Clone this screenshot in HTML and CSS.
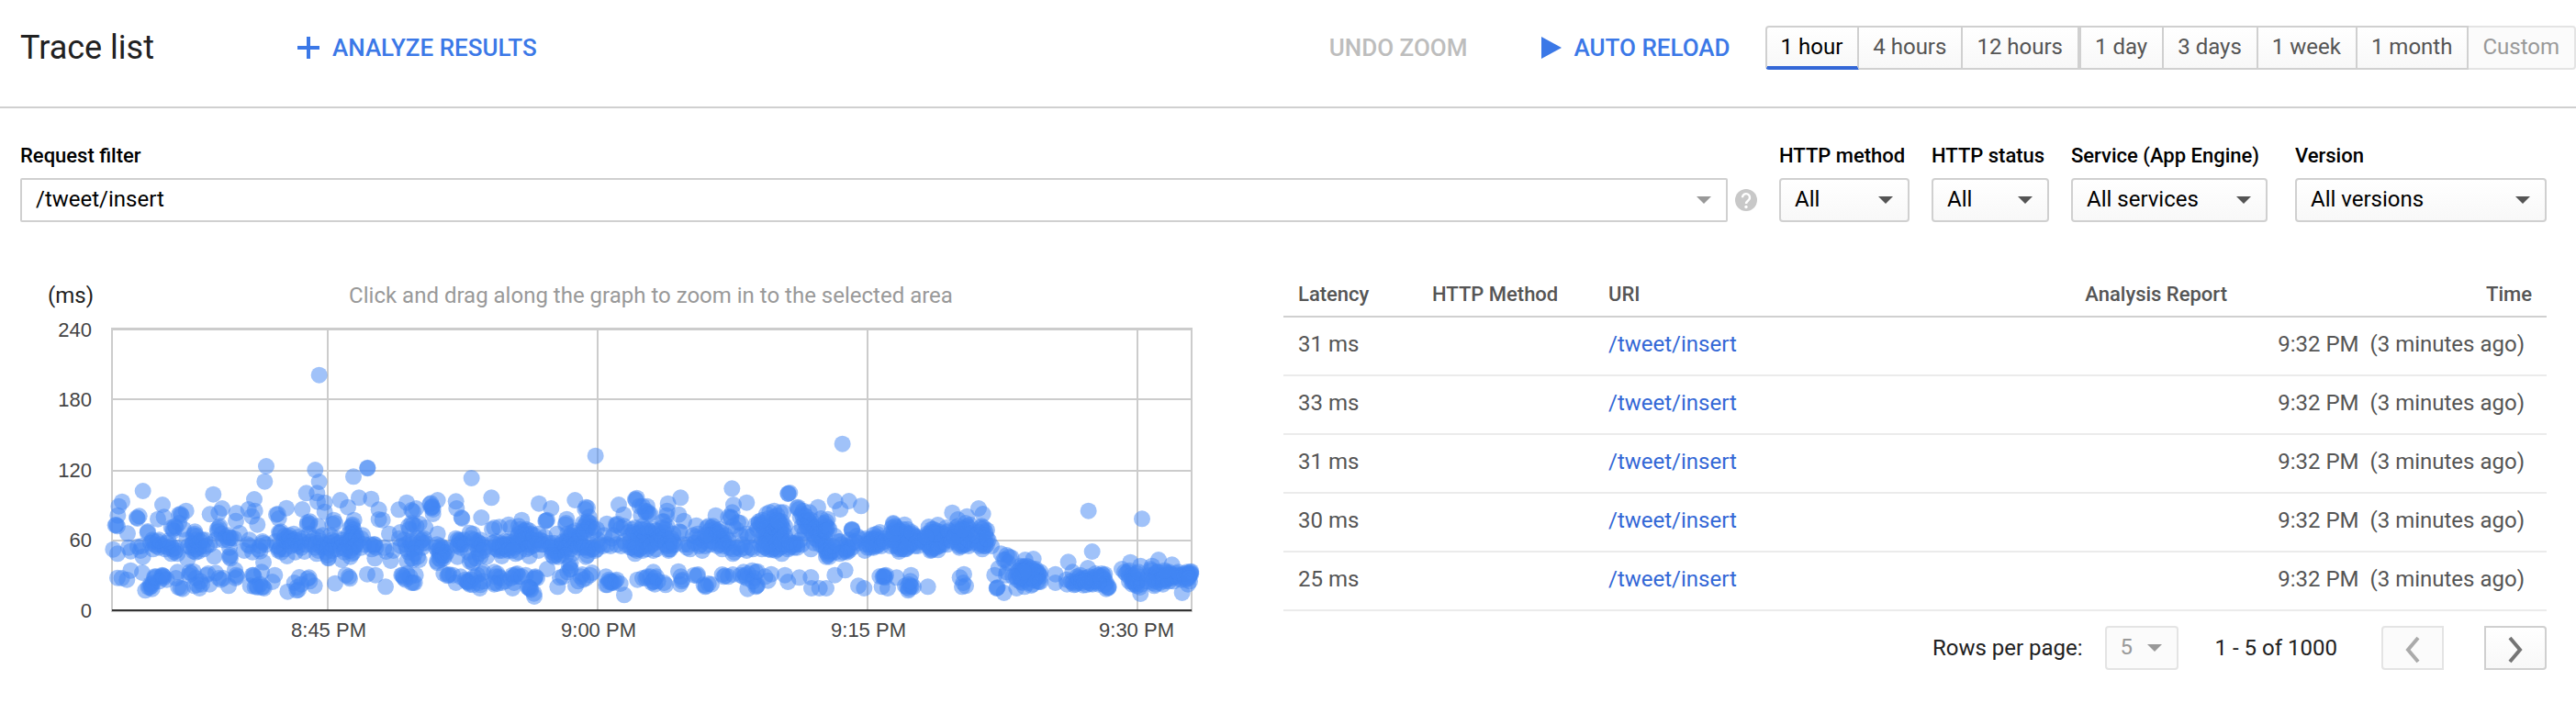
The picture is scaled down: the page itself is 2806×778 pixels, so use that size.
FILE: index.html
```html
<!DOCTYPE html>
<html lang="en">
<head>
<meta charset="utf-8">
<title>Trace list</title>
<link rel="stylesheet" href="styles.css">
</head>
<body>
<header class="toolbar">
  <h1 class="title">Trace list</h1>
  <button class="action" type="button">
    <svg class="icon" width="24" height="24" viewBox="0 0 24 24" aria-hidden="true"><path d="M10 0h4v10h10v4H14v10h-4V14H0v-4h10z" fill="currentColor"/></svg>
    ANALYZE RESULTS
  </button>
  <div class="toolbar-right">
    <button class="action action-undo" type="button" disabled>UNDO ZOOM</button>
    <button class="action action-reload" type="button">
      <svg class="icon" width="22" height="24" viewBox="0 0 22 24" aria-hidden="true"><path d="M0 0l22 12L0 24z" fill="currentColor"/></svg>
      AUTO RELOAD
    </button>
    <div class="ranges" role="group" aria-label="Time range">
      <button class="range range-on" type="button" aria-pressed="true">1 hour</button>
      <button class="range" type="button">4 hours</button>
      <button class="range range-split" type="button">12 hours</button>
      <button class="range" type="button">1 day</button>
      <button class="range" type="button">3 days</button>
      <button class="range" type="button">1 week</button>
      <button class="range" type="button">1 month</button>
      <button class="range" type="button" disabled>Custom</button>
    </div>
  </div>
</header>

<form class="filters">
  <div class="field field-request">
    <label class="label" for="request">Request filter</label>
    <div class="request-row">
      <span class="picker picker-light"><input class="control text-box" id="request" type="text" value="/tweet/insert"></span>
      <svg class="help" width="24" height="24" viewBox="0 0 24 24" role="img" aria-label="Help"><circle cx="12" cy="12" r="12" fill="#c8c8c8"/><path d="M8 9.200a4 4 0 1 1 6.600 3c-1.500 1.300-2.600 1.900-2.600 3.800" fill="none" stroke="#fff" stroke-width="2.400"/><circle cx="12" cy="19.500" r="1.700" fill="#fff"/></svg>
    </div>
  </div>
  <div class="field field-method">
    <label class="label" for="method">HTTP method</label>
    <span class="picker"><select class="control" id="method"><option>All</option></select></span>
  </div>
  <div class="field field-status">
    <label class="label" for="status">HTTP status</label>
    <span class="picker"><select class="control" id="status"><option>All</option></select></span>
  </div>
  <div class="field field-service">
    <label class="label" for="service">Service (App Engine)</label>
    <span class="picker"><select class="control" id="service"><option>All services</option></select></span>
  </div>
  <div class="field field-version">
    <label class="label" for="version">Version</label>
    <span class="picker"><select class="control" id="version"><option>All versions</option></select></span>
  </div>
</form>

<main class="panels">
  <svg class="chart" viewBox="22 290 1376 430" role="img" aria-label="Latency over time">
    <text class="unit" x="52" y="330">(ms)</text>
    <text class="hint" x="709" y="330">Click and drag along the graph to zoom in to the selected area</text>
    <g class="grid">
      <path d="M121 358.500H1299" stroke-width="3"/>
      <path d="M121 435H1299M121 513H1299M121 589H1299M122 357V667M357 357V665M651 357V665M945 357V665M1239 357V665M1298 357V667" stroke-width="2"/>
      <path d="M121 666.500H1299" stroke-width="1"/>
    </g>
    <g class="y-labels">
      <text x="100" y="367">240</text>
      <text x="100" y="443">180</text>
      <text x="100" y="520">120</text>
      <text x="100" y="596">60</text>
      <text x="100" y="673">0</text>
    </g>
    <g class="x-labels">
      <text x="358" y="694">8:45 PM</text>
      <text x="652" y="694">9:00 PM</text>
      <text x="946" y="694">9:15 PM</text>
      <text x="1238" y="694">9:30 PM</text>
    </g>
    <path class="axis" d="M122 665H1298"/>
    <g class="dots" id="dots"></g>
  </svg>

  <section class="results">
    <table class="traces">
      <thead>
        <tr><th class="col-latency">Latency</th><th class="col-method">HTTP Method</th><th class="col-uri">URI</th><th class="col-report">Analysis Report</th><th class="col-time">Time</th></tr>
      </thead>
      <tbody>
        <tr><td>31 ms</td><td></td><td><a href="#t1">/tweet/insert</a></td><td></td><td class="time">9:32 PM &nbsp;(3 minutes ago)</td></tr>
        <tr><td>33 ms</td><td></td><td><a href="#t2">/tweet/insert</a></td><td></td><td class="time">9:32 PM &nbsp;(3 minutes ago)</td></tr>
        <tr><td>31 ms</td><td></td><td><a href="#t3">/tweet/insert</a></td><td></td><td class="time">9:32 PM &nbsp;(3 minutes ago)</td></tr>
        <tr><td>30 ms</td><td></td><td><a href="#t4">/tweet/insert</a></td><td></td><td class="time">9:32 PM &nbsp;(3 minutes ago)</td></tr>
        <tr><td>25 ms</td><td></td><td><a href="#t5">/tweet/insert</a></td><td></td><td class="time">9:32 PM &nbsp;(3 minutes ago)</td></tr>
      </tbody>
    </table>
    <div class="pager">
      <label for="rows">Rows per page:</label>
      <span class="picker picker-light picker-rows"><select class="control" id="rows" disabled><option>5</option></select></span>
      <span class="count">1 - 5 of 1000</span>
      <button class="page page-prev" type="button" disabled aria-label="Previous page"><svg width="20" height="30" viewBox="0 0 20 30"><path d="M16 2L5 15l11 13" fill="none" stroke="currentColor" stroke-width="4"/></svg></button>
      <button class="page" type="button" aria-label="Next page"><svg width="20" height="30" viewBox="0 0 20 30"><path d="M4 2l11 13L4 28" fill="none" stroke="currentColor" stroke-width="4"/></svg></button>
    </div>
  </section>
</main>
<script src="chart.js"></script>
</body>
</html>
```
FILE: styles.css
```css
* { box-sizing: border-box; }
body { margin: 0; background: #fff; color: #000; font-family: Roboto, "Liberation Sans", sans-serif; font-size: 24px; }
button, input, select { font: inherit; }

.toolbar { display: flex; align-items: center; min-height: 118px; padding: 0 0 12px 22px; border-bottom: 2px solid #d0d0d0; }
.title { margin: 0; color: #212121; font-size: 36px; font-weight: 400; line-height: 44px; }
.action { display: flex; align-items: center; gap: 14px; padding: 0; border: 0; background: none; color: #3b78e7; font-size: 26px; font-weight: 500; line-height: 32px; white-space: nowrap; }
.action:disabled { color: #bdbdbd; }
.title + .action { margin-left: 156px; }
.icon { display: block; }
.toolbar-right { display: flex; align-items: center; margin-left: auto; }
.action-reload { margin: 0 38px 0 80px; }
.ranges { display: flex; }
.range { height: 48px; padding: 0 16px 2px 15px; border: 2px solid #d0d0d0; border-left-width: 0; background: linear-gradient(#fff, #f8f8f8); color: #555; white-space: nowrap; }
.range-on { border-left-width: 2px; border-bottom: 4px solid #3367d6; border-radius: 4px 0 0 4px; padding-bottom: 0; color: #000; }
.range-split { border-right-width: 4px; }
.range:disabled { border-color: #e4e4e4; border-radius: 0 4px 4px 0; background: #fbfbfb; color: #999; }

.filters { display: flex; gap: 24px; padding: 38px 32px 0 22px; }
.label { display: block; margin-bottom: 10px; font-size: 22px; font-weight: 500; line-height: 28px; white-space: nowrap; }
.field-request { flex: 1; }
.field-method { width: 142px; }
.field-status { width: 128px; }
.field-service { width: 214px; }
.field-version { width: 274px; margin-left: 6px; }
.request-row { display: flex; align-items: center; gap: 8px; }
.help { flex: none; }
.picker { position: relative; display: block; flex: 1; }
.picker::after { content: ""; position: absolute; right: 18px; top: 20px; border: 8px solid transparent; border-top-color: #555; border-bottom-width: 0; pointer-events: none; }
.picker-light::after { border-top-color: #999; }
.control { display: block; width: 100%; height: 48px; margin: 0; padding: 0 15px 2px; border: 2px solid #d0d0d0; border-radius: 4px; background: linear-gradient(#fff, #f8f8f8); color: #000; appearance: none; }
.control:disabled { border-color: #e4e4e4; background: #fbfbfb; color: #999; opacity: 1; }
.text-box { border-radius: 2px; background: #fff; }

.panels { display: grid; grid-template-columns: 1fr 1fr; padding: 48px 32px 40px 22px; }
.chart { display: block; width: 100%; }
.unit { fill: #212121; font-size: 24px; }
.hint { fill: #999; font-size: 24px; text-anchor: middle; }
.y-labels, .x-labels { fill: #444; font-family: "Liberation Sans", Arial, sans-serif; font-size: 22px; text-anchor: end; }
.x-labels { text-anchor: middle; }
.grid { fill: none; stroke: #ccc; }
.axis { stroke: #333; stroke-width: 2; }
.dots { fill: #4285f4; fill-opacity: 0.5; }

.traces { width: 100%; border-spacing: 0; color: #555; table-layout: fixed; }
.traces th { height: 56px; padding: 6px 16px 0; border-bottom: 2px solid #d0d0d0; font-size: 22px; font-weight: 500; text-align: left; white-space: nowrap; }
.traces td { height: 64px; padding: 0 16px 4px; border-bottom: 2px solid #ebebeb; white-space: nowrap; }
.traces a { color: #3367d6; text-decoration: none; }
.col-latency { width: 146px; }
.col-method { width: 192px; }
.col-time { width: 332px; }
.traces .col-report, .traces .col-time { text-align: right; }
.traces .time { padding-right: 24px; text-align: right; }
.pager { display: flex; align-items: center; justify-content: flex-end; margin-top: 16px; color: #212121; }
.picker-rows { flex: none; width: 80px; margin: 0 40px 0 24px; }
.count { margin-right: 48px; }
.page { display: grid; place-items: center; width: 68px; height: 48px; padding: 4px 0 0; border: 2px solid #d0d0d0; border-radius: 0 4px 4px 0; background: linear-gradient(#fff, #f8f8f8); color: #757575; }
.page-prev { margin-right: 44px; border-radius: 4px 0 0 4px; }
.page:disabled { border-color: #e4e4e4; background: #fbfbfb; color: #aaa; }
```
FILE: chart.js
```js
// Samples come in three blocks; each pair is x,y in thirds of a chart unit from the block's start.
const blocks = [
  { start: 0, samples: `1043,386 870,684 865,734 1030,696 1043,735 1201,689 1201,691 1155,718 467,765 697,776 399,800 388,815 385,845 531,810 831,792 608,830
1001,772 1036,772 1112,795 1173,787 1213,791 1038,800 1061,803 1137,818 936,821 988,825 1238,826 1303,826 1329,803 726,822 773,837 812,825 833,830 686,841 715,837
447,852 455,847 449,855 516,857 536,850 590,840 585,842 593,845 771,863 823,848 903,842 908,840 911,855 1061,833 1091,860 1238,858 1250,860 1157,860 1345,828
380,876 384,880 377,877 417,904 482,901 483,897 565,890 572,880 568,895 575,885 560,885 600,890 585,870 637,898 636,905 632,910 642,912 710,890 715,885 718,880 841,875
783,903 712,898 725,905 738,915 750,918 746,910 915,903 912,900 918,898 930,912 1005,868 1012,872 1004,875 1013,865 1040,880 1087,873 1095,870 1150,880 1145,885 1155,890 1152,875 1272,905 1308,900 1335,880 1345,870 1338,890
370,956 384,970 420,950 427,962 450,947 463,945 459,960 467,980 498,925 500,930 505,940 510,945 492,935 515,930 520,950 525,940 500,955 535,945 540,955 545,935 550,950 560,945 565,955 570,965 575,960 560,970 580,970 575,950 550,928 610,925 520,925 613,988 615,945
625,950 630,935 635,945 640,955 645,940 650,950 655,930 660,945 665,955 640,965 632,962 628,940 650,962 640,925 670,925 685,940 660,925 675,945 700,979 705,925 730,925 745,925 755,918 765,920 750,950 752,975 753,985 750,980 798,960 810,940 815,925 815,945 825,965 845,955 850,945 860,935 858,930 870,940 850,962 861,998
905,945 912,955 910,960 915,950 900,930 920,965 930,955 928,925 938,930 940,915 945,925 950,920 945,910 960,905 955,930 962,940 970,935 975,915 965,925 950,945 975,945 985,930 990,920 938,978 965,965 985,950 995,963 1000,940 1010,905 1015,930 1020,940 1025,920 1030,950 1035,935 1040,960 1045,945 1050,930 1055,950 1060,940 1040,915 1055,910 1035,970 1065,965 1073,983 1070,975 1073,985 1072,950 1080,935 1085,925 1090,945 1095,930 1100,940 1105,920 1100,955 1085,960 1080,910 1110,935 1115,950 1120,925 1125,940 1130,955 1135,930 1140,945 1145,920 1150,935 1155,950 1160,925 1165,940 1145,960 1155,965 1150,900 1155,910 1160,905 1140,905 1150,915 1145,930 1165,915 1170,930 1160,945 1145,980 1150,970 1180,920 1185,910 1117,990 1125,965 1190,940 1180,950
1220,945 1225,940 1228,950 1222,940 1215,955 1225,985 1210,940 1262,963 1277,993 1285,960 1255,950 1310,945 1325,940 1330,955 1320,925 1305,920 1345,940 1335,965 1330,995 1345,985 1340,930 1348,955
384,1049 398,1050 415,1055 427,1025 465,1032 475,1090 485,1080 492,1070 490,1080 500,1065 495,1075 497,1085 505,1050 510,1045 505,1045 532,1042 530,1040 535,1045 533,1050 528,1045 520,1060 545,1055 575,1050 580,1030 583,1080 597,1085 590,1082 620,1030 625,1035 618,1040 632,1028 640,1050 655,1060 645,1072 652,1083 635,1075 660,1070 675,1040 680,1035 685,1070 705,1033 715,1050 722,1055 730,1050 747,1075 768,1023 772,1040 770,1050 775,1045
828,1040 830,1045 825,1040 855,1030 818,1075 833,1078 838,1075 850,1070 860,1078 863,1083 842,1080 898,1040 890,1062 855,1080 940,1094 962,1065 978,1047 970,1090 970,1080 975,1088 985,1070 1010,1048 1005,1052 1012,1060 1028,1075 1095,1067 1130,1040 1140,1045 1143,1051 1200,1037 1227,1040 1260,1078 1315,1040 1318,1045 1320,1050 1325,1055 1330,1035 1345,1065 1340,1045 1312,1040` },
  { start: 450, samples: `596,650 191,723 256,787 140,799 142,822 158,852 160,855 223,852 80,795 58,805 62,818 60,820 65,825 62,815 65,840 55,808 10,822 0,832 20,872 40,885 0,875 10,880 411,806 451,822 529,795 565,818 570,820 562,825 575,850
435,862 433,863 438,860 502,857 500,870 498,875 355,860 345,880 312,875 320,885 282,883 265,885 258,890 80,905 185,902 195,905 35,920 30,925 25,930 32,935 40,935 15,920 0,930 10,950 5,970 20,990 15,980 30,950 0,990
75,950 85,955 90,960 95,955 100,965 92,970 85,965 80,960 105,955 98,950 88,975 95,980 85,985 80,1000 78,995 90,990 105,975 110,965 100,985 90,945 78,940 145,925 150,930 155,935 148,940 152,925 160,940 140,920 145,945 165,925 155,950 170,940 145,980 210,930 215,935 205,940 215,945 220,925 212,955 190,920 200,925 180,965 215,970 190,990 185,995 195,1000 205,985 220,980 225,940 235,950 240,980 230,960
260,935 270,940 280,945 290,950 300,945 310,940 320,945 275,955 285,935 295,940 305,955 315,950 290,960 280,960 325,940 330,950 335,935 340,945 345,940 300,930 310,930 285,950 295,945 265,950 330,930 345,930 305,940 270,930 350,925 355,930 360,935 350,940 355,915 365,920 370,925 375,930 360,905 365,895 370,905 355,900 375,915 380,920 385,905 380,895 370,890 365,910 360,925 375,940 385,935 390,925 345,905 350,890 340,915 380,950 390,945 370,955 345,965 335,970 380,978 290,978 310,960 325,960 405,925 415,925 425,930 430,915 420,940 410,905 395,910 410,960 425,940 400,940
445,935 455,945 465,950 475,945 485,940 460,960 470,965 480,960 455,965 465,975 475,980 490,950 495,960 485,975 500,930 450,950 460,935 470,905 460,980 455,975 490,930 505,920 510,925 515,930 520,915 525,920 530,925 515,910 505,905 535,910 520,900 530,895 510,940 525,945 540,930 545,920 500,950 515,955 530,940 520,970 540,950 550,940 545,910 500,975 555,950 560,945 565,950 570,960 575,950 580,940 585,955 590,950 565,980 570,975 595,960 560,880 565,870 570,865 575,880 570,890 555,895 580,870 585,885 565,890 575,870 560,900 590,900 555,870 600,890 605,925 610,940 600,955
633,872 663,875 665,878 668,872 625,910 635,940 650,920 655,910 645,945 665,940 680,945 690,930 695,940 620,945 680,885 690,880 688,842 672,810 731,788 726,792 728,795 750,815 765,815 758,830 765,832 770,840 760,835 745,845 775,840 740,815 833,806 874,787 828,845 830,830 868,842 885,863 815,865
705,900 710,910 720,900 730,905 740,900 715,890 725,885 735,915 745,920 750,910 755,925 760,915 765,920 770,910 775,925 780,915 785,920 790,910 795,925 765,890 770,895 775,900 780,905 755,890 745,890 760,905 750,880 785,890 795,895 800,905 805,915 770,935 780,940 760,935 790,935 745,935 735,945 730,950 725,945 740,955 745,950 720,940 715,950 730,960 725,970 750,960 755,945 710,930 710,950 725,955 765,955 775,945 795,955 785,960 800,930 810,910 815,925 820,900 825,890 830,880 815,885 825,915 835,925 840,935 830,945 835,955 825,940 845,920 850,930 845,945 840,955 835,960 855,940 850,905 820,865 870,898 875,900 885,940 895,950 905,955 900,940 925,878 915,910 925,915 935,920 930,905 940,940 945,960 935,945 950,930 955,945 920,935
989,845 965,880 975,885 980,880 960,885 970,895 980,905 985,910 990,915 995,905 1000,910 1005,920 1010,915 1000,925 995,895 990,900 985,890 1005,900 975,910 1010,930 1000,940 1015,925 1020,910 1020,940 1025,935 985,935 995,945 970,940 975,930 1015,945 1010,955 1030,925 1005,890 965,910 955,910 1035,950 1045,955 1050,965 1060,950 1070,955 1045,970 1085,950 1090,960 1042,757 1090,803 1047,810 1043,835 1038,850 1040,853 1030,850 1062,868 1070,870 1055,890 1045,880 1070,910 1090,905 1095,915 1110,910 1075,940 1105,950 1110,955 1225,774 1226,773 1231,771
1155,840 1165,835 1180,830 1200,835 1210,835 1180,850 1190,845 1160,855 1130,870 1135,875 1140,880 1130,865 1120,875 1145,870 1155,880 1150,890 1160,885 1165,890 1170,875 1175,880 1180,885 1185,870 1190,875 1195,880 1200,870 1205,865 1205,880 1200,890 1195,895 1190,890 1185,900 1180,895 1175,900 1170,905 1165,910 1160,905 1155,910 1150,915 1160,920 1165,925 1170,920 1175,915 1180,920 1185,925 1190,915 1195,910 1200,905 1205,900 1210,890 1215,880 1145,905 1140,920 1150,930 1155,935 1160,940 1165,945 1170,940 1175,935 1180,945 1185,940 1190,935 1195,930 1200,940 1205,920 1145,945 1150,950 1160,955 1170,958 1180,950 1190,955 1200,950 1165,935 1175,955 1185,960 1135,940 1140,955 1205,970 1210,945 1215,930 1220,940 1225,955 1200,925 1205,935 1190,860 1125,890 1140,860 1195,865 1215,910 1230,950 1240,935 1245,940 1250,935 1255,940 1245,950 1240,945 1265,925 1230,930 1270,940 1255,950
1258,818 1260,825 1255,820 1323,818 1333,855 1270,840 1280,845 1285,850 1275,855 1265,850 1290,860 1280,865 1290,870 1285,880 1295,865 1300,875 1290,885 1300,860 1305,880 1310,890 1300,895 1315,885 1305,905 1310,910 1320,900 1315,920 1325,910 1330,915 1320,925 1335,925 1340,930 1325,890 1335,900 1340,945 1345,920 1330,940 1310,935 1300,955 1350,940 1330,870 1345,870 1350,960 1350,980 1345,895 1275,830 1295,835 1270,880 1260,900 1280,900
8,1040 0,1065 5,1065 100,1035 115,1040 118,1038 112,1042 130,1040 155,1045 140,1065 170,1055 175,1060 180,1065 185,1070 178,1062 182,1060 190,1055 200,1045 210,1040 225,1035 230,1030 215,1065 220,1072 218,1083 195,1072 230,1060 265,1030 275,1035 280,1045 270,1045 285,1050 265,1065 275,1068 290,1065 300,1060 265,1070 325,1040 330,1045 335,1038 320,1050 340,1035 345,1045 325,1083 330,1065 368,1040 355,1045 400,1045 398,1048 395,1052 405,1050 380,1080 383,1085 378,1082 385,1088 375,1080 395,1100 396,1110 438,1020 480,1048 472,1078 510,1010 513,1022 515,1020 505,1030 515,1000 553,1038 548,1045 540,1060 555,1055 531,1075 585,1032 578,1040 565,1050 490,1045
630,1045 640,1055 645,1060 650,1062 655,1065 648,1065 640,1062 660,1060 635,1072 630,1072 665,1055 677,1068 690,1105 733,1055 750,1050 765,1045 760,1050 785,1030 775,1045 790,1050 785,1060 780,1065 790,1070 800,1060 785,1062 795,1045 825,1072 820,1065 867,1028 875,1045 878,1060 873,1070 880,1055 918,1040 930,1038 928,1042 950,1072 955,1078 957,1075 965,1068 975,1070 1010,1038 1015,1045 1020,1042 1045,1038 1030,1045 1070,1040 1080,1045 1085,1040 1090,1050 1080,1030 1095,1035 1108,1025 1120,1030 1115,1050 1093,1085 1123,1075 1120,1078 1125,1073 1110,1060 1125,1028 1170,1037 1160,1058 1150,1045 1215,1040 1225,1062 1262,1048 1300,1047 1302,1083 1328,1083` },
  { start: 900, samples: `53,611 857,830 1032,856 869,963 29,798 74,798 46,825 114,814 5,857 0,865 5,885 0,880 10,890 0,895 28,912 84,890 85,893 83,892 45,930 50,940 40,930 75,925 85,935 65,945 70,955 75,960 65,960 60,955 55,965 72,950 68,965 85,950 100,912 105,935 95,930 110,920 5,960 0,965 10,970 15,965 5,975 0,950 20,960 30,965 10,980 45,970 20,945
130,920 140,925 145,930 150,920 155,925 160,930 165,935 150,940 155,945 160,920 165,915 170,925 175,930 150,930 140,940 145,950 130,940 126,960 155,950 165,945 170,940 180,935 175,900 165,905 155,908 185,920 180,945 135,950 190,930
219,870 220,873 225,880 215,885 256,875 222,895 228,900 232,905 225,910 230,915 235,900 240,895 245,900 250,905 240,910 235,920 230,925 240,925 250,915 255,910 260,900 265,905 260,915 265,920 255,925 245,930 240,940 235,935 230,940 225,930 220,925 225,945 240,950 245,955 235,955 255,945 250,940 260,935 270,930 275,920 280,915 285,910 280,905 290,915 285,925 290,930 280,935 275,940 270,945 265,950 290,945 238,963 255,955 250,930 245,915 215,915 210,905 215,925 210,945 220,905 250,890 230,885 265,890 280,900 300,915 305,930 295,935 310,920 300,945 315,930 260,955
335,882 330,905 335,910 340,900 345,905 350,910 355,900 360,895 365,905 370,910 375,900 365,876 350,890 340,915 345,920 350,925 355,915 360,920 365,925 370,920 375,915 380,910 385,905 380,925 375,930 370,935 365,940 360,930 355,935 350,940 345,935 340,930 335,925 330,920 325,935 335,945 340,950 345,955 350,950 355,945 360,950 365,945 370,945 380,940 385,930 390,915 395,900 392,885 340,960 345,958 365,958 350,900 360,905 345,890 325,915 400,910 405,925 395,940 400,895 410,930
412,836 430,858 460,848 498,822 512,840 430,890 435,895 440,900 445,905 430,910 425,900 435,915 440,920 445,915 450,910 455,905 450,920 445,925 440,930 435,925 450,930 455,925 460,920 445,935 440,940 450,940 435,945 445,945 455,940 430,935 460,935 435,950 465,945 460,900 465,885 462,880 470,875 460,890 455,870 425,885 420,915 470,905 475,935 465,925 430,880 445,890 505,885 510,890 500,900 510,905 520,900 525,893 515,885 520,910 505,915 515,920 510,930 520,935 505,940 515,945 500,930 495,935 525,940 510,955 520,945 530,925 500,945 490,910 508,880 540,945 525,920
28,1040 62,1024 0,1083 105,1075 124,1083 175,1044 185,1045 190,1042 195,1040 188,1045 192,1048 182,1078 201,1083 230,1048 277,1040 258,1075 270,1070 275,1075 278,1078 265,1080 268,1090 270,1085 285,1078 275,1060 332,1078 437,1048 450,1037 444,1078 456,1075 448,1065
571,970 590,975 598,980 585,990 605,983 580,990 563,1018 550,1040 590,1030 588,1040 595,1000 557,1083 560,1080 558,1082 581,1098 650,990 677,987 635,1010 640,1015 645,1020 650,1015 655,1010 645,1012 640,1025 635,1030 630,1025 650,1025 655,1020 660,1025 640,1035 645,1040 650,1035 635,1040 630,1035 655,1035 660,1030 665,1040 645,1050 640,1055 635,1050 650,1055 630,1045 635,1062 640,1065 660,1045 670,1030 675,1035 680,1025 685,1030 680,1040 690,1045 685,1050 695,1035 700,1030 695,1040 690,1030 700,1045 685,1020 690,1060 695,1062 670,1055 675,1070 660,1065 648,1078 622,1083 670,1074 620,1045 625,1030 625,1055 665,1015 670,1045 675,1020 680,1055 635,1045 645,1030 610,1045 700,1062
749,1037 749,1065 791,997 805,1030 785,1055 787,1070 800,1060 805,1065 815,1070 810,1072 820,1065 825,1060 820,1045 830,1040 825,1050 835,1055 840,1050 835,1065 840,1073 855,1017 850,1050 855,1060 860,1065 865,1055 870,1050 860,1045 870,1060 875,1055 880,1060 880,1045 885,1050 890,1040 885,1060 890,1055 895,1050 900,1045 895,1060 900,1055 905,1050 905,1040 910,1055 910,1037 900,1035 890,1070 870,1070 865,1068 915,1065 920,1080 922,1082 915,1085 923,1078 910,1072 890,1065 850,1072 880,1035 845,1060
966,1020 994,998 1027,1010 975,1030 985,1030 990,1025 980,1035 990,1045 1000,1040 1000,1050 1005,1055 1010,1060 1015,1055 1010,1050 1005,1065 1015,1065 1020,1060 1000,1060 1010,1070 1000,1070 1015,1075 1020,1045 1025,1055 1015,1035 1025,1080 1027,1101 990,1060 1030,1070 1020,1030 1086,990 1130,1006 1060,1020 1063,1025 1055,1040 1065,1045 1070,1040 1075,1035 1080,1030 1070,1055 1075,1060 1080,1050 1085,1045 1090,1040 1085,1030 1090,1055 1075,1070 1072,1075 1065,1065 1095,1045 1100,1040 1105,1045 1110,1040 1115,1035 1120,1040 1125,1045 1120,1050 1115,1050 1110,1055 1100,1055 1105,1060 1125,1035 1130,1040 1135,1045 1130,1050 1120,1030 1110,1030 1100,1070 1090,1065 1140,1040 1145,1035 1145,1045 1135,1060 1120,1060 1150,1050 1155,1040 1160,1045 1165,1040 1170,1045 1160,1055 1105,1025 1150,1030 1170,1035 1180,1035 1185,1040 1190,1035 1190,1030 1185,1045 1188,1038 1192,1036 1180,1050 1188,1060 1182,1070 1175,1055 1163,1098 1192,1028 1178,1030 1185,1050 1065,1010 1050,1060` }
];

const NS = "http://www.w3.org/2000/svg";
const dots = document.getElementById("dots");
for (const { start, samples } of blocks) {
  for (const pair of samples.trim().split(/\s+/)) {
    const [x, y] = pair.split(",").map(Number);
    const dot = document.createElementNS(NS, "circle");
    dot.setAttribute("cx", start + x / 3);
    dot.setAttribute("cy", 280 + y / 3);
    dot.setAttribute("r", 9);
    dots.appendChild(dot);
  }
}
```
